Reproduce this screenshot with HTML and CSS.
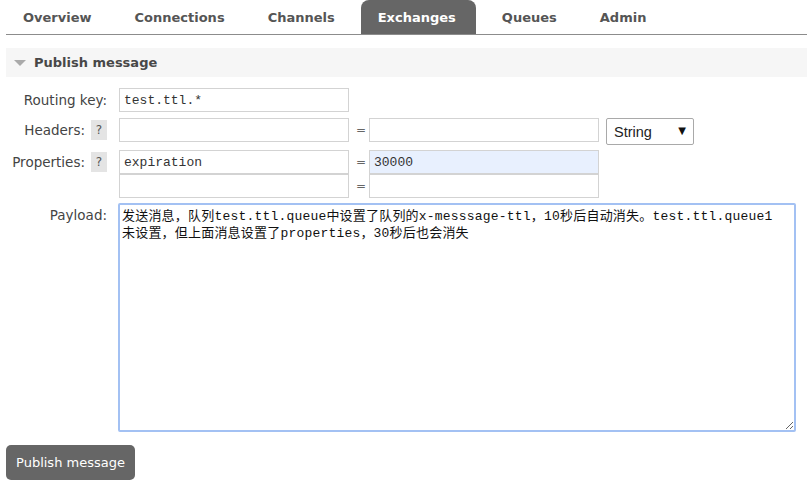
FILE: index.html
```html
<!DOCTYPE html>
<html lang="zh-CN">
<head>
<meta charset="utf-8">
<title>Publish message</title>
<link rel="stylesheet" href="styles.css">
</head>
<body>
<div class="page">
  <nav class="tabs">
    <a class="tab">Overview</a>
    <a class="tab">Connections</a>
    <a class="tab">Channels</a>
    <a class="tab active">Exchanges</a>
    <a class="tab">Queues</a>
    <a class="tab">Admin</a>
  </nav>

  <section class="section">
    <h2 class="section-head"><span class="tri"></span>Publish message</h2>

    <form class="form">
      <div class="row row-rk">
        <label class="label">Routing key:</label>
        <div class="fields">
          <input class="inp" type="text" value="test.ttl.*">
        </div>
      </div>

      <div class="row row-hd">
        <label class="label">Headers: <span class="help">?</span></label>
        <div class="fields">
          <div class="pair">
            <input class="inp" type="text" value="">
            <span class="eq">=</span>
            <input class="inp" type="text" value="">
            <span class="sel-wrap">
              <select class="sel"><option>String</option></select>
              <span class="sel-arrow">▼</span>
            </span>
          </div>
        </div>
      </div>

      <div class="row row-pr">
        <label class="label">Properties: <span class="help">?</span></label>
        <div class="fields">
          <div class="pair">
            <input class="inp" type="text" value="expiration">
            <span class="eq">=</span>
            <input class="inp filled" type="text" value="30000">
          </div>
          <div class="pair">
            <input class="inp" type="text" value="">
            <span class="eq">=</span>
            <input class="inp" type="text" value="">
          </div>
        </div>
      </div>

      <div class="row row-pl">
        <label class="label">Payload:</label>
        <div class="fields">
          <textarea class="payload">发送消息，队列test.ttl.queue中设置了队列的x-messsage-ttl，10秒后自动消失。test.ttl.queue1
未设置，但上面消息设置了properties，30秒后也会消失</textarea>
        </div>
      </div>

      <button class="btn" type="button">Publish message</button>
    </form>
  </section>
</div>
</body>
</html>
```

FILE: styles.css
```css
* { box-sizing: border-box; }

html, body {
  margin: 0;
  padding: 0;
  background: #fff;
}

body {
  font-family: "DejaVu Sans", Verdana, sans-serif;
  color: #444;
  font-size: 13px;
}

.page {
  padding-left: 6px;
}

.tabs {
  display: flex;
  gap: 9px;
  height: 35px;
  border-bottom: 1px solid #8c8c8c;
}

.tab {
  display: block;
  padding: 1px 17px 0;
  height: 34px;
  line-height: 34px;
  font-weight: bold;
  font-size: 13px;
  color: #555;
  text-decoration: none;
}

.tab.active {
  background: #666;
  color: #fff;
  border-radius: 8px 8px 0 0;
  padding: 1px 20px 0 17px;
}

.section {
  margin-top: 13px;
}

.section-head {
  margin: 0;
  height: 29px;
  background: #f6f6f6;
  display: flex;
  align-items: center;
  padding-left: 8px;
  font-size: 13px;
  font-weight: bold;
  color: #484848;
}

.tri {
  width: 0;
  height: 0;
  border-left: 6px solid transparent;
  border-right: 6px solid transparent;
  border-top: 6px solid #aaa;
  margin-right: 8px;
  margin-top: 1px;
}

.form {
  padding-top: 11px;
}

.row {
  display: flex;
  align-items: flex-start;
}

.row-hd { margin-top: 6px; }
.row-pr { margin-top: 5px; }
.row-pl { margin-top: 5px; }

.label {
  width: 101px;
  height: 24px;
  display: flex;
  justify-content: flex-end;
  align-items: center;
  gap: 6px;
  font-size: 13.5px;
  color: #444;
  white-space: nowrap;
}

.help {
  display: inline-flex;
  width: 16px;
  height: 20px;
  align-items: center;
  justify-content: center;
  background: #e4e4e4;
  color: #555;
  font-size: 12px;
}

.fields {
  margin-left: 12px;
}

.pair {
  display: flex;
  align-items: flex-start;
}

.inp {
  width: 230px;
  height: 24px;
  margin: 0;
  border: 1px solid #d3d3d3;
  padding: 0 4px;
  font-family: "Liberation Mono", "Courier New", monospace;
  font-size: 13px;
  color: #333;
  background: #fff;
  outline: none;
}

.inp.filled {
  background: #e8f0fe;
}

.eq {
  width: 20px;
  height: 24px;
  line-height: 24px;
  text-align: left;
  padding-left: 7px;
  color: #666;
  font-size: 12px;
}

.sel-wrap {
  position: relative;
  margin-left: 7px;
  display: inline-block;
}

.sel {
  -webkit-appearance: none;
  appearance: none;
  width: 88px;
  height: 27px;
  border: 1px solid #a9a9a9;
  border-radius: 2px;
  background: #fff;
  padding: 0 0 0 7px;
  font-family: "Liberation Sans", Arial, sans-serif;
  font-size: 14.5px;
  color: #222;
  margin: 0;
}

.sel-arrow {
  position: absolute;
  right: 8px;
  top: 7px;
  font-size: 10px;
  color: #111;
  pointer-events: none;
  font-family: "DejaVu Sans", sans-serif;
}

.payload {
  display: block;
  width: 678px;
  height: 229px;
  margin: 0 0 0 -1px;
  border: 2px solid #a3c1f3;
  border-radius: 2px;
  padding: 3px 2px;
  font-family: "Liberation Mono", "Noto Sans CJK SC", monospace;
  font-size: 13px;
  line-height: 17px;
  letter-spacing: 0.2px;
  color: #111;
  outline: none;
  resize: both;
  white-space: pre;
  overflow: hidden;
}

.btn {
  display: block;
  margin-top: 13px;
  width: 129px;
  height: 35px;
  background: #666;
  color: #fff;
  border: none;
  border-radius: 5px;
  font-family: "DejaVu Sans", Verdana, sans-serif;
  font-size: 13px;
  padding: 0;
}
```
